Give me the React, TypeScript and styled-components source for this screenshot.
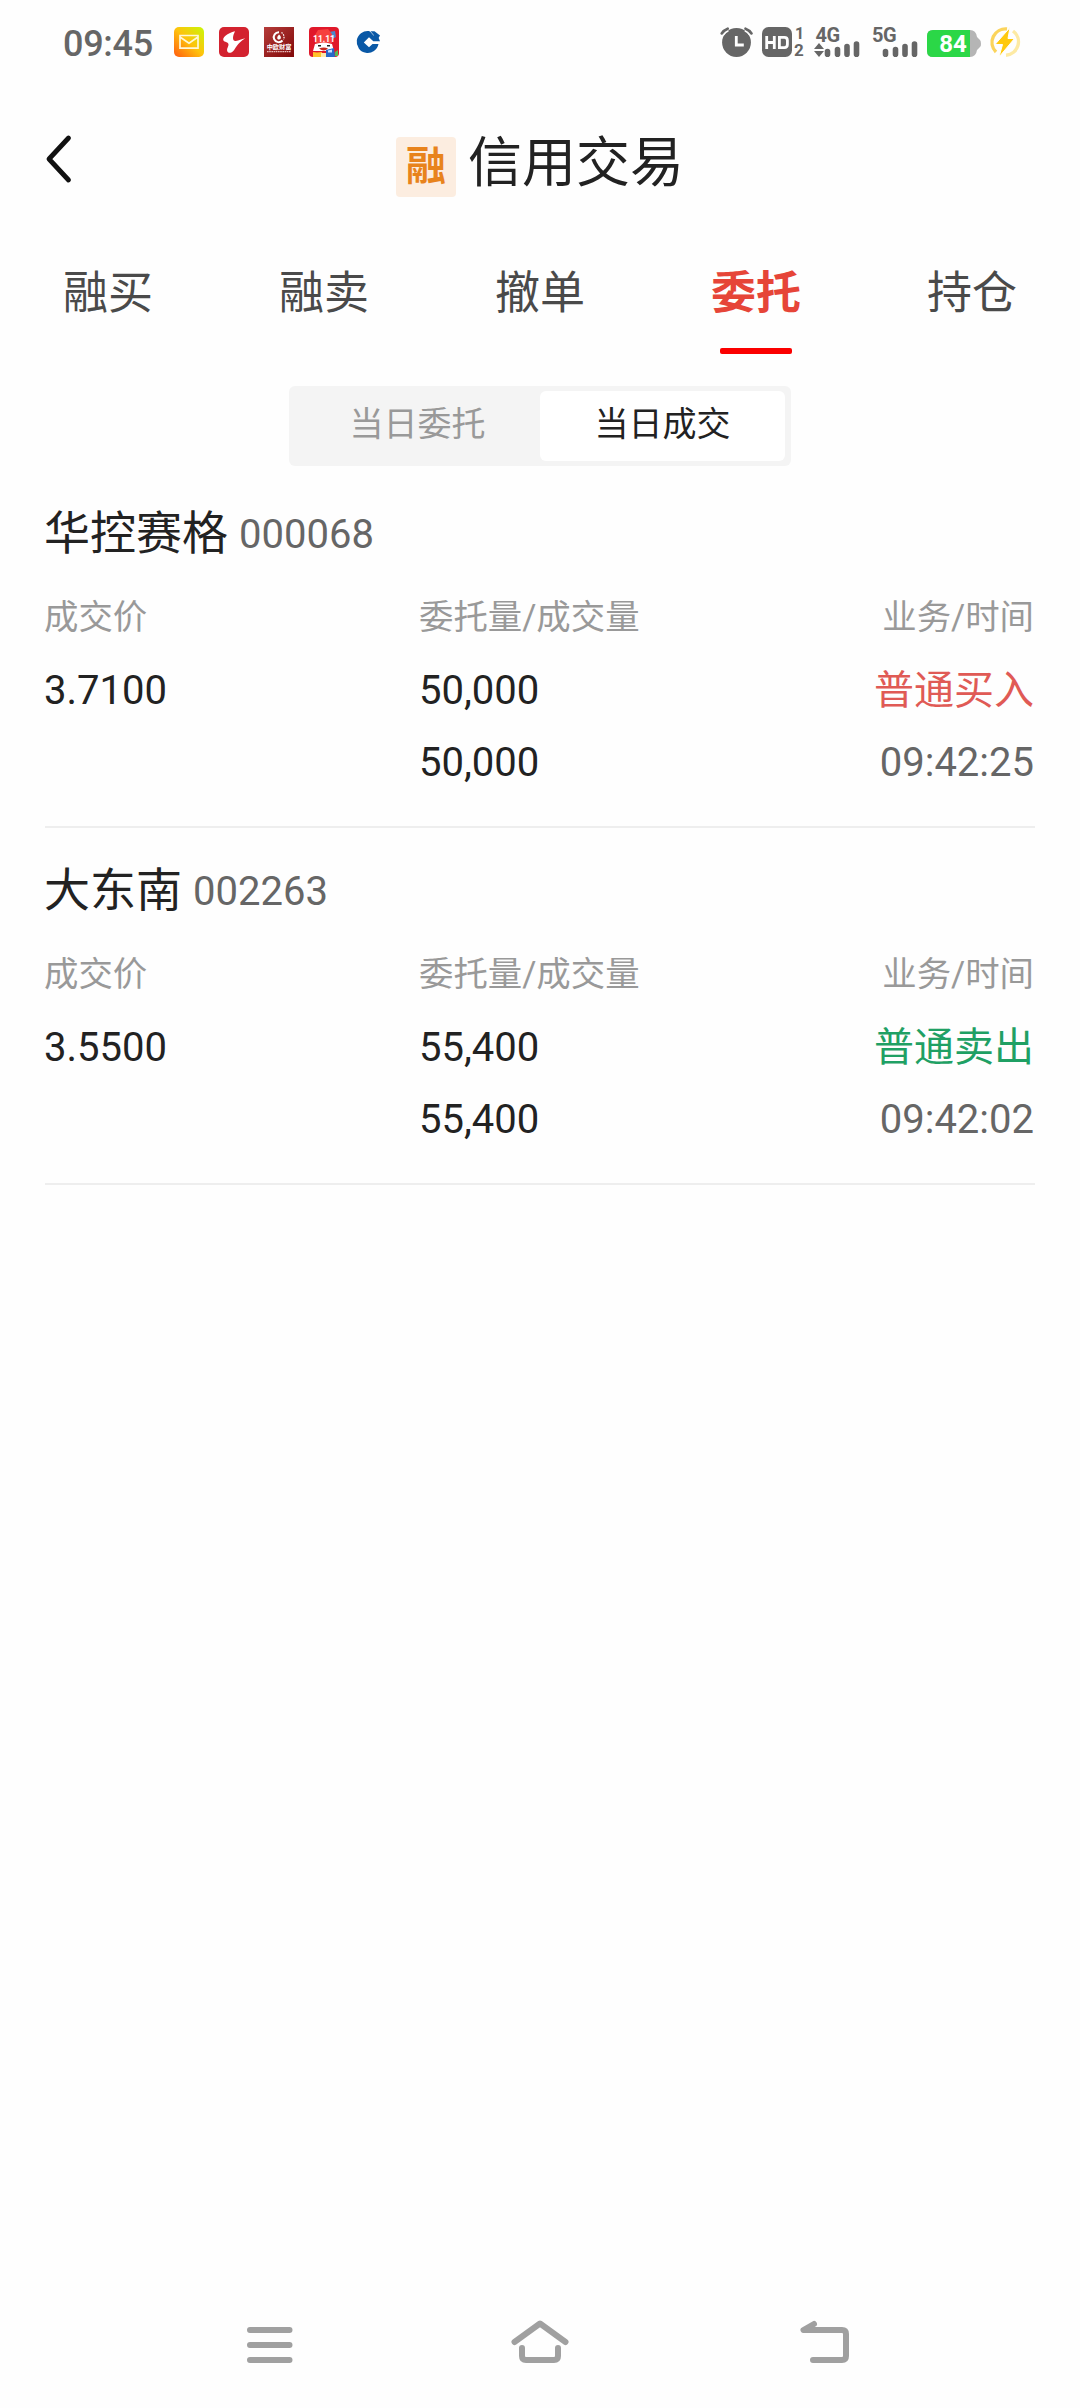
import React from "react";
import styled, { createGlobalStyle } from "styled-components";

const GlobalStyle = createGlobalStyle`
  * { box-sizing: border-box; }
  body { margin: 0; background: #fff; }
`;

const FONT = `Roboto, "Noto Sans CJK SC", sans-serif`;

const Screen = styled.div`
  width: 1080px;
  height: 2408px;
  display: flex;
  flex-direction: column;
  overflow: hidden;
  background: #fefefe;
  color: #222;
  font-family: ${FONT};
`;

const StatusBar = styled.header`
  height: 84px;
  padding: 0 59px 0 63px;
  display: flex;
  justify-content: space-between;
  align-items: center;
`;

const StatusGroup = styled.div<{ $gap: number }>`
  display: flex;
  align-items: center;
  gap: ${(p) => p.$gap}px;
  svg { display: block; }
`;

const Clock = styled.span`
  width: 96px;
  padding-top: 3px;
  font-size: 36px;
  line-height: 42px;
  font-weight: 500;
  letter-spacing: -0.3px;
  color: #666;
`;

const TitleBar = styled.div`
  height: 152px;
  padding: 0 44px;
  display: grid;
  grid-template-columns: 60px 1fr 60px;
  align-items: center;
`;

const BackButton = styled.button`
  width: 60px;
  height: 60px;
  padding: 0;
  border: 0;
  background: none;
  svg { display: block; }
`;

const Title = styled.h1`
  margin: 0;
  padding-top: 8px;
  display: flex;
  justify-content: center;
  align-items: center;
  gap: 12px;
  font-size: 54px;
  line-height: 64px;
  font-weight: 400;
`;

const MarginBadge = styled.span`
  width: 60px;
  height: 60px;
  margin-top: 6px;
  border-radius: 4px;
  background: #fcede0;
  color: #e8831c;
  font-size: 40px;
  line-height: 60px;
  font-weight: 700;
  text-align: center;
`;

const Tabs = styled.nav`
  height: 118px;
  display: grid;
  grid-template-columns: repeat(5, 1fr);
`;

const Tab = styled.button<{ $active?: boolean }>`
  padding: 24px 0 0;
  border: 0;
  background: none;
  display: flex;
  flex-direction: column;
  align-items: center;
  font-family: inherit;
  font-size: 45px;
  line-height: 68px;
  font-weight: ${(p) => (p.$active ? 700 : 400)};
  color: ${(p) => (p.$active ? "#e64538" : "#4a4a4a")};

  &::after {
    content: "";
    width: 72px;
    height: 6px;
    margin-top: 20px;
    border-radius: 2px;
    background: ${(p) => (p.$active ? "#fb0000" : "transparent")};
  }
`;

const Segmented = styled.div`
  align-self: center;
  width: 502px;
  height: 80px;
  margin-top: 32px;
  padding: 5px 6px;
  display: grid;
  grid-template-columns: 1fr 1fr;
  border-radius: 6px;
  background: #f4f4f4;
`;

const Segment = styled.button<{ $active?: boolean }>`
  padding: 0 0 4px;
  border: 0;
  border-radius: 6px;
  background: ${(p) => (p.$active ? "#fff" : "transparent")};
  color: ${(p) => (p.$active ? "#222" : "#999")};
  font-family: inherit;
  font-size: 34px;
  line-height: 66px;
`;

const TradeList = styled.main`
  flex: 1;
  padding: 0 45px;
`;

const Trade = styled.article`
  height: 357px;
  padding-top: 31px;
  border-bottom: 2px solid #eee;

  &:first-child { height: 362px; padding-top: 36px; }
`;

const TradeName = styled.h2`
  height: 65px;
  margin: 0 0 0 -1px;
  display: flex;
  align-items: flex-start;
  gap: 11px;
  font-size: 46px;
  line-height: 62px;
  font-weight: 400;
`;

const Code = styled.span`
  font-size: 40px;
  line-height: 65px;
  color: #666;
`;

const Columns = styled.div`
  margin-top: 14px;
  display: grid;
  grid-template-columns: 375px 1fr 1fr;
`;

const Column = styled.div<{ $end?: boolean }>`
  display: flex;
  flex-direction: column;
  align-items: ${(p) => (p.$end ? "flex-end" : "flex-start")};
  margin-left: -1px;
  padding-right: 1px;
`;

const Label = styled.span`
  margin-bottom: 2px;
  font-size: 34.4px;
  line-height: 72px;
  color: #999;
`;

const TONES = { ink: "#222", muted: "#666", buy: "#e05a55", sell: "#1fa064" };

const Value = styled.span<{ $tone?: keyof typeof TONES }>`
  font-size: 40px;
  line-height: 72px;
  color: ${(p) => TONES[p.$tone ?? "ink"]};
`;

const NavBar = styled.footer`
  height: 128px;
  padding: 0 135px;
  display: grid;
  grid-template-columns: repeat(3, 1fr);
  justify-items: center;
  align-items: center;
  svg { display: block; }
`;

const MailIcon = () => (
  <svg width="30" height="30" viewBox="0 0 30 30">
    <defs>
      <linearGradient id="mail" x1="0" y1="1" x2="1" y2="0">
        <stop offset="0" stopColor="#ff5a10" />
        <stop offset=".5" stopColor="#ffc20c" />
        <stop offset="1" stopColor="#c8f808" />
      </linearGradient>
    </defs>
    <rect width="30" height="30" rx="5" fill="url(#mail)" />
    <path d="M6 8.500h18v12.700H6z M6 10l9 6.200 9-6.200" fill="none" stroke="#fff8d8" strokeWidth="1.700" />
  </svg>
);

const BirdIcon = () => (
  <svg width="30" height="30" viewBox="0 0 30 30">
    <rect width="30" height="30" rx="5" fill="#d3222f" />
    <path d="M16 4.200C11 5.500 4 9 4.200 12.500c.2 2.800 3.800 2 5 4 1.200 2.200-1.700 4.500-1 7.500.5 2.300 3.500 2.500 5.800.3 3-3 3.500-7.500 12.300-13.100-4 .8-6.300 2.300-9.500 2.800-1.800.2-2.800-1-2.800-3C14 8.500 15 6.500 16 4.200z" fill="#fff" />
  </svg>
);

const FundIcon = () => (
  <svg width="30" height="30" viewBox="0 0 30 30">
    <defs>
      <linearGradient id="fund" x1="0" y1="0" x2="1" y2="1">
        <stop offset="0" stopColor="#b53c3a" />
        <stop offset="1" stopColor="#800808" />
      </linearGradient>
    </defs>
    <rect width="30" height="30" fill="url(#fund)" />
    <path d="M15 5.200A5 5 0 1 0 18.500 13.500" fill="none" stroke="#fff" strokeWidth="2" />
    <path d="M17.500 5.500a5.500 5.500 0 0 1 2 7" fill="none" stroke="#fff" strokeWidth="1.200" strokeDasharray="1.500 1" />
    <path d="M15 7.500c2.500 1.500 2.500 5 0 5s-2.300-2.500 0-5z" fill="#fff" />
    <text x="15" y="22.300" fontSize="6.200" fontWeight="700" textAnchor="middle" fill="#fff">中欧财富</text>
    <path d="M3 24.700h24" stroke="#e9baba" strokeWidth="1.200" strokeDasharray="1.600 .6" />
  </svg>
);

const ShopIcon = () => (
  <svg width="30" height="30" viewBox="0 0 30 30">
    <defs>
      <clipPath id="shop"><rect width="30" height="30" rx="4" /></clipPath>
    </defs>
    <g clipPath="url(#shop)">
      <rect width="30" height="30" fill="#e0182a" />
      <path d="M20 5l6-1 1 6-4 2z" fill="#4a86c8" />
      <path d="M6 8l3-5 10-1 4 5v9H6z" fill="#f6403e" />
      <text x="15" y="14.500" fontSize="8.500" fontWeight="700" textAnchor="middle" fill="#fff">11.11</text>
      <path d="M6 17q9-3 17 0l2 7H4z" fill="#fff" />
      <path d="M9 18h3v1.500H9zM18 18h3v1.500h-3z" fill="#222" />
      <path d="M10 21.500q5-2 9 0-4 4-9 0z" fill="#c82a20" />
      <path d="M4 25l4 .5 5-.5v5H4z" fill="#ffc22a" />
      <path d="M17 23l8-2 1 9h-9z" fill="#2768c8" />
      <path d="M19 23.500l4-1v3h-4z" fill="#c8e2ff" />
      <path d="M12 26h5v4h-5z" fill="#ffe9a8" />
      <path d="M26 25l3-2v6h-3z" fill="#54b853" />
    </g>
  </svg>
);

const BankIcon = () => (
  <svg width="30" height="30" viewBox="0 0 30 30">
    <path d="M15 4a11 11 0 1 0 9.500 13H18.500L15 20.200 9.800 15.500 15 10.300l4.300 4H26L23 7 19.500 8.500 16.500 5z" fill="#0958a6" />
    <path d="M16.500 4.200h4L26 8.500l-2.500 4z" fill="#0958a6" />
  </svg>
);

const AlarmIcon = () => (
  <svg width="34" height="30" viewBox="0 0 34 30">
    <circle cx="16.500" cy="15.500" r="14.400" fill="#666" />
    <path d="M1.700 6.500Q4 3 7.700 1.700M31.500 6.500Q29.200 3 25.500 1.700" fill="none" stroke="#fefefe" strokeWidth="6" />
    <path d="M1.700 6.500Q4 3 7.700 1.700M31.500 6.500Q29.200 3 25.500 1.700" fill="none" stroke="#666" strokeWidth="2.600" strokeLinecap="round" />
    <path d="M16.300 9v9h7.500" fill="none" stroke="#fefefe" strokeWidth="2.800" />
  </svg>
);

const HdIcon = () => (
  <svg width="44" height="44" viewBox="0 -7 44 44">
    <rect width="30" height="30" rx="6.500" fill="#666" />
    <g fill="none" stroke="#fefefe" strokeWidth="2.800">
      <path d="M4.700 9v13M12.300 9v13M4.700 15.500h7.600" />
      <path d="M17.400 10.400h5q3 0 3 3v4.200q0 3-3 3h-5z" />
    </g>
    <text x="37.500" y="11.700" fontSize="16" fontWeight="700" textAnchor="middle" fill="#666">1</text>
    <text x="37" y="29" fontSize="17" fontWeight="700" textAnchor="middle" fill="#666">2</text>
  </svg>
);

const SignalIcon = ({ label, arrows }: { label: string; arrows?: boolean }) => (
  <svg width={arrows ? 50 : 47} height="44" viewBox={`0 -7 ${arrows ? 50 : 47} 44`}>
    <text x={arrows ? 1.5 : 0} y="14.500" fontSize="20" fontWeight="700" letterSpacing="-.5" fill="#666">{label}</text>
    {arrows && <path d="M0 22l5-6 5 6zM0 24l5 6 5-6z" fill="#666" />}
    <path d="M13.500 24.500v2.700M23.500 22.500v4.700M33 19.500v7.700M42.500 17v10.200" stroke="#666" strokeWidth="5.600" strokeLinecap="round" />
  </svg>
);

const BatteryIcon = () => (
  <svg width="54" height="34" viewBox="0 -5 54 34">
    <path d="M6 0h37q6 0 7 7l3 3q1 1 1 4t-1 3l-3 3q-1 7-7 7H6q-6 0-6-6V6q0-6 6-6z" fill="#b5b5b5" />
    <path d="M43 0H6Q0 0 0 6v15q0 6 6 6h37z" fill="#2bd747" />
    <text x="26" y="21.800" fontSize="24" fontWeight="700" textAnchor="middle" fill="#fff">84</text>
  </svg>
);

const ChargeIcon = () => (
  <svg width="32" height="32" viewBox="0 0 32 32">
    <g fill="none" strokeWidth="3.400">
      <path d="M7 26A13.500 13.500 0 0 1 18 3" stroke="#fbd45c" />
      <path d="M24 5a13.500 13.500 0 0 1-7 24.300" stroke="#fdeaa4" />
    </g>
    <path d="M21 1.500L6 18.500h7.500L10 31 25.500 12.500H19z" fill="#ffc90d" stroke="#fefefe" strokeWidth="1" />
  </svg>
);

interface TradeRecord {
  name: string;
  code: string;
  price: string;
  ordered: string;
  filled: string;
  action: string;
  tone: "buy" | "sell";
  time: string;
}

const trades: TradeRecord[] = [
  { name: "华控赛格", code: "000068", price: "3.7100", ordered: "50,000", filled: "50,000", action: "普通买入", tone: "buy", time: "09:42:25" },
  { name: "大东南", code: "002263", price: "3.5500", ordered: "55,400", filled: "55,400", action: "普通卖出", tone: "sell", time: "09:42:02" },
];

const tabs = ["融买", "融卖", "撤单", "委托", "持仓"];

export default function App() {
  return (
    <>
      <GlobalStyle />
      <Screen>
        <StatusBar>
          <StatusGroup $gap={15}>
            <Clock>09:45</Clock>
            <MailIcon />
            <BirdIcon />
            <FundIcon />
            <ShopIcon />
            <BankIcon />
          </StatusGroup>
          <StatusGroup $gap={8}>
            <AlarmIcon />
            <HdIcon />
            <SignalIcon label="4G" arrows />
            <SignalIcon label="5G" />
            <BatteryIcon />
            <ChargeIcon />
          </StatusGroup>
        </StatusBar>

        <TitleBar>
          <BackButton aria-label="返回">
            <svg width="60" height="60" viewBox="0 0 60 60">
              <path d="M24.500 8L5 29l19.500 21" fill="none" stroke="#111" strokeWidth="4.800" strokeLinecap="round" strokeLinejoin="round" />
            </svg>
          </BackButton>
          <Title>
            <MarginBadge>融</MarginBadge>
            信用交易
          </Title>
        </TitleBar>

        <Tabs>
          {tabs.map((tab) => (
            <Tab key={tab} $active={tab === "委托"}>{tab}</Tab>
          ))}
        </Tabs>

        <Segmented>
          <Segment>当日委托</Segment>
          <Segment $active>当日成交</Segment>
        </Segmented>

        <TradeList>
          {trades.map((t) => (
            <Trade key={t.code}>
              <TradeName>
                {t.name}
                <Code>{t.code}</Code>
              </TradeName>
              <Columns>
                <Column>
                  <Label>成交价</Label>
                  <Value>{t.price}</Value>
                </Column>
                <Column>
                  <Label>委托量/成交量</Label>
                  <Value>{t.ordered}</Value>
                  <Value>{t.filled}</Value>
                </Column>
                <Column $end>
                  <Label>业务/时间</Label>
                  <Value $tone={t.tone}>{t.action}</Value>
                  <Value $tone="muted">{t.time}</Value>
                </Column>
              </Columns>
            </Trade>
          ))}
        </TradeList>

        <NavBar>
          <svg width="60" height="60" viewBox="0 0 60 60">
            <path d="M10 16h39.500M10 31h39.500M10 46h39.500" stroke="#a0a0a0" strokeWidth="6" strokeLinecap="round" />
          </svg>
          <svg width="60" height="60" viewBox="0 0 60 60" fill="none" stroke="#a0a0a0" strokeWidth="6" strokeLinecap="round" strokeLinejoin="round">
            <path d="M4.500 28L30 9.500l25.500 18.500" />
            <path d="M12 34v8q0 4 4 4h28q4 0 4-4v-8" />
          </svg>
          <svg width="90" height="60" viewBox="0 0 90 60" fill="none" stroke="#a0a0a0" strokeWidth="6" strokeLinecap="round" strokeLinejoin="round">
            <path d="M49 10l-10.500 6H77q4 0 4 4v22q0 4-4 4H48" />
          </svg>
        </NavBar>
      </Screen>
    </>
  );
}
